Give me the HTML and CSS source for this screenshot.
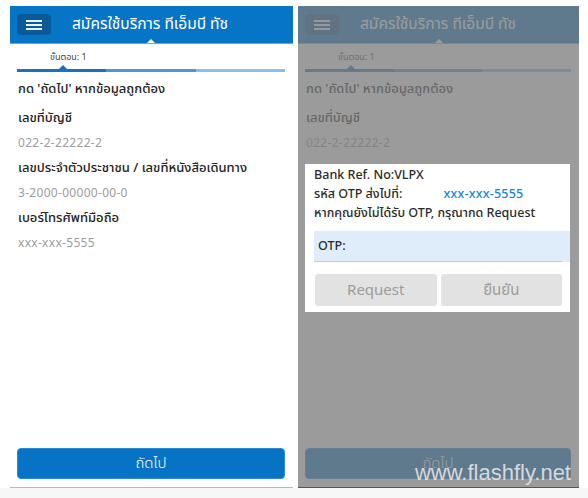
FILE: index.html
```html
<!DOCTYPE html>
<html lang="th">
  <head>
    <meta charset="UTF-8" />
    <meta name="viewport" content="width=device-width, initial-scale=1.0" />
    <title>สมัครใช้บริการ ทีเอ็มบี ทัช</title>
    <link rel="stylesheet" href="styles.css">
  </head>
  <body>
    <div class="screens">
      <!-- หน้าจอที่ 1 -->
      <div class="phone phoneLeft">
        <div class="topBar">
          <span class="menuBtn"><i></i><i></i><i></i></span>
          <span class="title">สมัครใช้บริการ ทีเอ็มบี ทัช</span>
        </div>
        <div class="stepLabel">ขั้นตอน: 1</div>
        <div class="progress">
          <span class="seg seg1"></span>
          <span class="seg seg2"></span>
          <span class="seg seg3"></span>
        </div>
        <div class="info">
          <div class="hint">กด 'ถัดไป' หากข้อมูลถูกต้อง</div>
          <div class="label">เลขที่บัญชี</div>
          <div class="value">022-2-22222-2</div>
          <div class="label">เลขประจำตัวประชาชน / เลขที่หนังสือเดินทาง</div>
          <div class="value">3-2000-00000-00-0</div>
          <div class="label">เบอร์โทรศัพท์มือถือ</div>
          <div class="value">xxx-xxx-5555</div>
        </div>
        <button class="nextBtn">ถัดไป</button>
      </div>

      <!-- หน้าจอที่ 2 : OTP (ส่วนที่ถูก popup บังไว้ไม่ต้องแสดง) -->
      <div class="phone phoneRight">
        <div class="topBar">
          <span class="menuBtn"><i></i><i></i><i></i></span>
          <span class="title">สมัครใช้บริการ ทีเอ็มบี ทัช</span>
        </div>
        <div class="stepLabel">ขั้นตอน: 1</div>
        <div class="progress">
          <span class="seg seg1"></span>
          <span class="seg seg2"></span>
          <span class="seg seg3"></span>
        </div>
        <div class="info">
          <div class="hint">กด 'ถัดไป' หากข้อมูลถูกต้อง</div>
          <div class="label">เลขที่บัญชี</div>
          <div class="value">022-2-22222-2</div>
        </div>
        <button class="nextBtn">ถัดไป</button>

        <div class="overlay"></div>
        <div class="otpBox">
          <div class="otpLine">Bank Ref. No:VLPX</div>
          <div class="otpLine">รหัส OTP ส่งไปที่: <span class="otpPhone">xxx-xxx-5555</span></div>
          <div class="otpLine">หากคุณยังไม่ได้รับ OTP, กรุณากด Request</div>
          <div class="otpInput">OTP:</div>
          <div class="otpButtons">
            <button class="greyBtn">Request</button>
            <button class="greyBtn">ยืนยัน</button>
          </div>
        </div>
        <div class="watermark">www.flashfly.net</div>
      </div>
    </div>
  </body>
</html>
```

FILE: styles.css
```css
body {
  margin: 0;
  background: #f7f7f7;
  font-family: "Noto Sans Thai", "Noto Sans", "Liberation Sans", sans-serif;
}

.screens {
  display: flex;
  gap: 5px;
  height: 482px;
  padding: 6px 0 0 10px;
  background: #fff;
}

.phone {
  position: relative;
  display: flex;
  flex-direction: column;
  height: 481px;
  background: #fff;
  border-bottom: 1px solid #b9b9b9;
  overflow: hidden;
}

.phoneLeft {
  width: 283px;
}

.phoneRight {
  width: 281px;
  border-bottom-color: #555;
}

.topBar {
  position: relative;
  display: flex;
  align-items: center;
  height: 37px;
  background: #0675c6;
  border-bottom: 1px solid #4cb3ea;
}

.topBar::after {
  content: "";
  position: absolute;
  left: 137px;
  bottom: 0;
  border: 4px solid transparent;
  border-bottom: 4px solid #fff;
  border-top: 0;
}

.menuBtn {
  display: flex;
  flex-direction: column;
  justify-content: center;
  align-items: center;
  gap: 2px;
  width: 34px;
  height: 21px;
  margin-left: 7px;
  background: #0a5a9a;
  border-radius: 4px;
}

.menuBtn i {
  display: block;
  width: 16px;
  height: 2px;
  background: #e8f2fa;
}

.title {
  margin-left: 21px;
  color: #fff;
  font-size: 15.5px;
}

.stepLabel {
  margin: 6px 0 0 40px;
  height: 14px;
  font-size: 9px;
  color: #444;
}

.progress {
  position: relative;
  display: flex;
  height: 3px;
  margin: 5px 8px 0 7px;
}

.progress::before {
  content: "";
  position: absolute;
  left: 42px;
  top: -4px;
  border: 4px solid transparent;
  border-bottom: 4px solid #1a6fc0;
  border-top: 0;
}

.seg {
  flex: 1;
}

.seg1 {
  background: #1a70c2;
}

.seg2 {
  background: #4c97d6;
}

.seg3 {
  background: #86bfe9;
}

.info {
  padding: 5px 0 0 8px;
}

.hint,
.label {
  height: 25px;
  line-height: 25px;
  font-size: 13px;
  font-weight: 500;
  color: #222;
}

.hint {
  margin-bottom: 4px;
}

.value {
  height: 25px;
  line-height: 25px;
  font-size: 12px;
  color: #9c9c9c;
  letter-spacing: 0.3px;
}

.nextBtn {
  margin: auto 8px 8px 7px;
  height: 31px;
  border: 1px solid #2a8ad4;
  border-radius: 4px;
  background: #0673c4;
  color: #fff;
  font-family: inherit;
  font-size: 15px;
  font-weight: 300;
}

.overlay {
  position: absolute;
  inset: 0;
  background: rgba(123, 123, 123, 0.76);
}

.otpBox {
  position: absolute;
  left: 7px;
  top: 158px;
  width: 265px;
  height: 148px;
  background: #fff;
}

.otpLine {
  height: 19px;
  line-height: 19px;
  margin-left: 9px;
  font-size: 12.5px;
  font-weight: 500;
  color: #2a2a2a;
}

.otpLine:first-child {
  margin-top: 2px;
}

.otpPhone {
  margin-left: 38px;
  color: #1188d8;
  letter-spacing: 0.2px;
}

.otpInput {
  height: 31px;
  line-height: 31px;
  margin: 8px 0 0 9px;
  padding-left: 4px;
  font-size: 12.5px;
  font-weight: 500;
  color: #2a2a2a;
  background: linear-gradient(#c9c9c9, #c9c9c9) left bottom / 248px 1px no-repeat, #deedf9;
}

.otpButtons {
  display: flex;
  gap: 4px;
  margin: 12px 8px 0 10px;
}

.greyBtn {
  flex: 1;
  height: 32px;
  border: 0;
  border-radius: 3px;
  background: #e2e2e2;
  color: #9c9c9c;
  font-family: inherit;
  font-size: 15px;
}

.watermark {
  position: absolute;
  right: 8px;
  bottom: 1px;
  font-family: "Liberation Sans", Arial, sans-serif;
  font-size: 22px;
  color: rgba(235, 235, 235, 0.85);
}
```
